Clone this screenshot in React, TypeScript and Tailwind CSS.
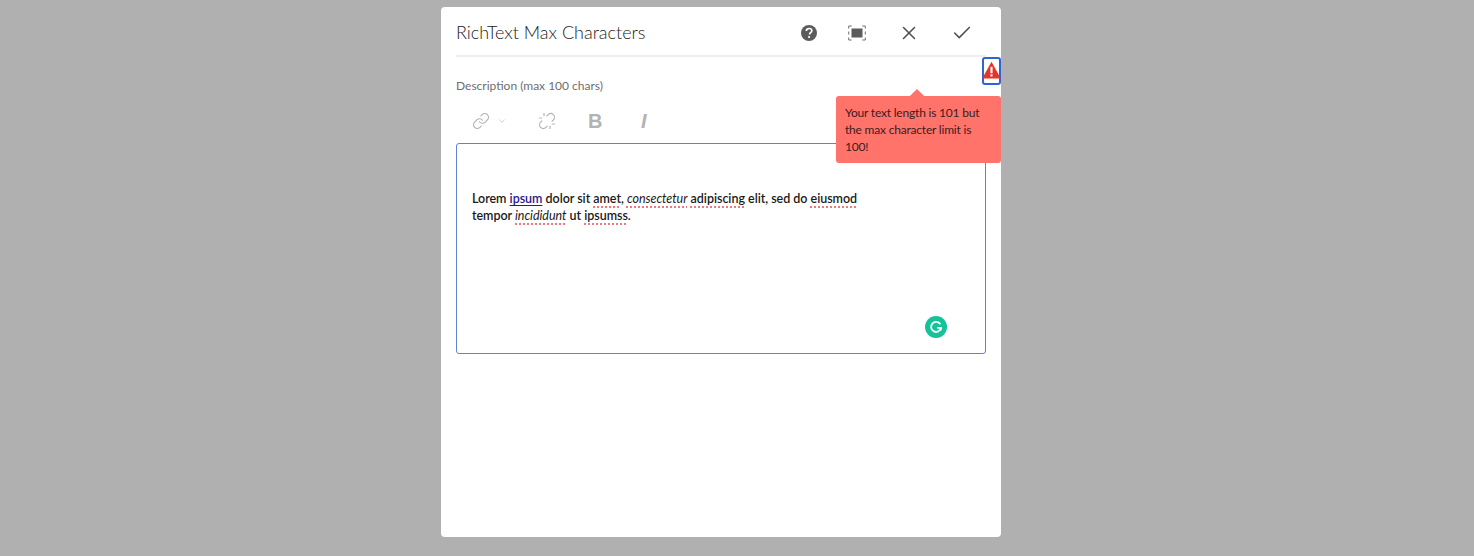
import { Check, ChevronDown, Link, Unlink, X } from "lucide-react"

function Spell({ children, italic }: { children: string; italic?: boolean }) {
  return (
    <span className={`underline decoration-dotted decoration-[#f0787c] decoration-[1.5px] underline-offset-[3px] ${italic ? "italic font-normal" : ""}`}>
      {children}
    </span>
  )
}

export default function App() {
  return (
    <div className="h-[556px] overflow-hidden bg-[#b0b0b0] flex justify-center pt-[7px] pr-[32px] font-['Lato',sans-serif]">
      <div className="relative w-[560px] h-[530px] bg-white rounded-[4px] flex flex-col">
        {/* Header */}
        <div className="mx-[15px] h-[50px] shrink-0 border-b-2 border-[#eeeeee] flex items-center justify-between">
          <h1 className="text-[18px] font-light text-[#222222] pt-[2px]">RichText Max Characters</h1>
          <div className="flex items-center mr-[13px] mt-[4px]">
            <svg viewBox="0 0 18 18" className="w-[18px] h-[18px]">
              <circle cx="9" cy="9" r="8" fill="#5c5c5c" />
              <path d="M6.3 7c.1-1.6 1.2-2.5 2.8-2.5s2.7.9 2.7 2.2c0 1-.5 1.6-1.3 2.1-.7.5-.9.8-.9 1.6" fill="none" stroke="#fff" strokeWidth="1.7" />
              <circle cx="9.1" cy="13" r="1.1" fill="#fff" />
            </svg>
            <svg viewBox="0 0 18 16" className="w-[18px] h-[16px] ml-[30px]">
              <rect x="3.5" y="3.5" width="11" height="9" fill="#5c5c5c" />
              <path d="M.7 3.5V1h3M14.3 1h3v2.5M17.3 12.5V15h-3M3.7 15h-3v-2.5M.7 6.5v3M17.3 6.5v3" fill="none" stroke="#6e6e6e" strokeWidth="1" />
            </svg>
            <X className="w-[22px] h-[22px] ml-[32px] text-[#505050]" strokeWidth={1.7} />
            <Check className="w-[22px] h-[22px] ml-[31px] text-[#505050]" strokeWidth={1.7} />
          </div>
        </div>

        {/* Body */}
        <div className="px-[15px] pt-[20px] flex flex-col">
          <label className="text-[12px] leading-[18px] text-[#6e6e6e]">Description (max 100 chars)</label>
          <div className="h-[38px] mt-[7px] flex items-center pl-[16px] text-[#b3b3b3]">
            <Link className="w-[18px] h-[18px]" strokeWidth={1.6} />
            <ChevronDown className="w-[10px] h-[10px] ml-[7px]" strokeWidth={1.5} />
            <Unlink className="w-[18px] h-[18px] ml-[31px]" strokeWidth={1.6} />
            <span className="ml-[32px] w-[14px] text-[20px] font-bold leading-none font-['Liberation_Sans',sans-serif]">B</span>
            <span className="ml-[39px] text-[20px] font-bold italic leading-none font-['Liberation_Sans',sans-serif]">I</span>
          </div>
          <div className="relative mt-[3px] h-[211px] w-[530px] border border-[#5f82d8] rounded-[3px] pt-[46px] pl-[15px] text-[12.5px] leading-[17px] font-semibold tracking-[-0.03px] text-[#1a1a1a]">
            <p>
              Lorem <span className="text-[#2a1a8a] underline underline-offset-2">ipsum</span> dolor sit <Spell>amet</Spell>, <Spell italic>consectetur</Spell> <Spell>adipiscing</Spell> elit, sed do <Spell>eiusmod</Spell>
              <br />
              tempor <Spell italic>incididunt</Spell> ut <Spell>ipsumss</Spell>.
            </p>
            {/* Grammarly badge */}
            <div className="absolute right-[38px] bottom-[15px] w-[22px] h-[22px] rounded-full bg-[#15c39a] flex items-center justify-center">
              <svg viewBox="0 0 16 16" className="w-[16px] h-[16px]">
                <path d="M12.3 5.2A5 5 0 1 0 13 8.8H9.2" fill="none" stroke="#fff" strokeWidth="1.8" />
                <path d="M12.8 8.4v3" fill="none" stroke="#fff" strokeWidth="1.6" />
              </svg>
            </div>
          </div>
        </div>

        {/* Error marker over the dialog edge */}
        <div className="absolute right-0 top-[50px] w-[19px] h-[28px] border-2 border-[#2f63d6] rounded-[3px] bg-white flex items-center justify-center">
          <svg viewBox="0 0 18 17" className="w-[19px] h-[18px] shrink-0 -mt-[2px]">
            <path d="M9 .8 17.8 16.6H.2Z" fill="#e5352b" />
            <rect x="8" y="5.5" width="2" height="6" fill="#fff" />
            <rect x="8" y="12.6" width="2" height="2" fill="#fff" />
          </svg>
        </div>

        {/* Error tooltip */}
        <div className="absolute right-0 top-[89px] w-[165px] h-[67px] bg-[#ff736b] rounded-[3px] pl-[9px] pr-[16px] pt-[8px] text-[12px] leading-[17px] tracking-[-0.2px] text-[#3a2020]">
          <span className="absolute left-[76px] -top-[5px] w-[10px] h-[10px] rotate-45 bg-[#ff736b]" />
          <p className="relative">Your text length is 101 but the max character limit is 100!</p>
        </div>
      </div>
    </div>
  )
}
